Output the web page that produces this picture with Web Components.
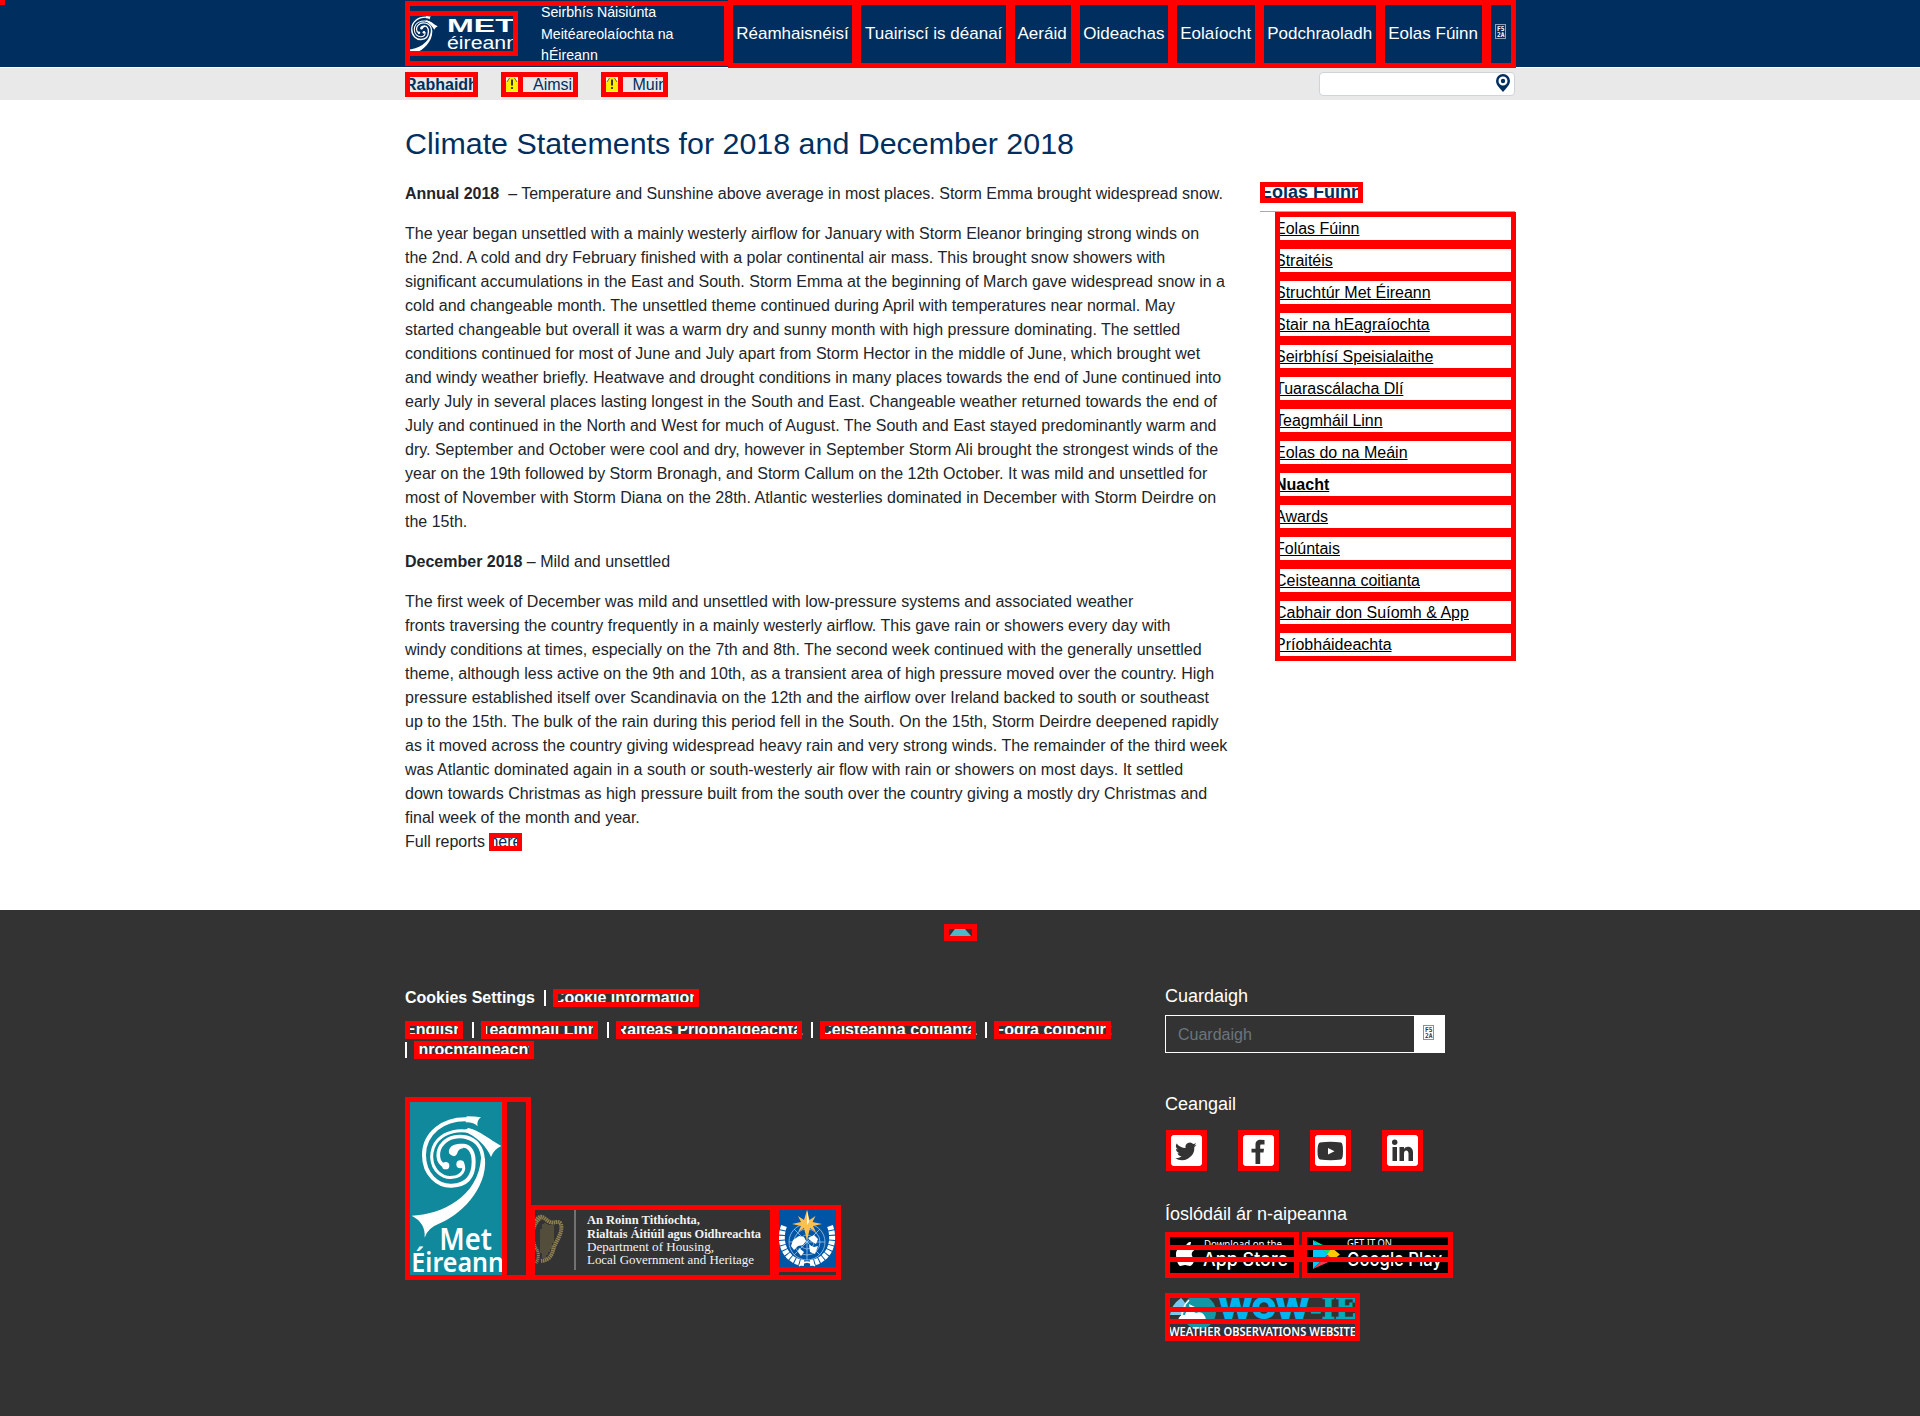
<!DOCTYPE html>
<html lang="ga">
<head>
<meta charset="utf-8">
<title>Climate Statements for 2018 and December 2018</title>
<style>
html,body{margin:0;padding:0;background:#fff}
body{font:16px/24px "Liberation Sans",Arial,sans-serif;color:#212529;overflow:hidden;height:1416px}
</style>
</head>
<body>
<met-page></met-page>
<script>
const SWIRL=`<g fill="none" stroke="#fff" stroke-linecap="round">
<path stroke-width="12" d="M235 119C140 108 87 165 87 225C87 285 130 319 170 317C215 315 236 290 236 245C236 208 216 194 200 198"/>
<path stroke-width="9" d="M276 183C225 130 110 145 110 232C112 272 143 296 172 292C200 290 212 270 203 252"/>
<path stroke-width="11" d="M150 258C124 248 124 210 145 189C175 156 262 160 264 240"/></g>
<g fill="#fff"><path d="M215 109Q240 109 258 112Q244 122 248 139Q236 126 212 127Z"/>
<path d="M220 144C255 152 285 180 319 198Q296 208 288 231C275 200 245 168 205 153Z"/>
<path d="M270 235C278 330 190 410 130 432Q98 444 89 473Q92 428 50 407C140 405 250 350 258 235Z"/>
<path d="M162 220C158 200 180 188 205 192L204 205Q190 206 186 222Q176 236 162 220Z"/>
<circle cx="152" cy="257" r="11"/><circle cx="196" cy="253" r="12"/></g>`;
const def=(name,css,html)=>customElements.define(name,class extends HTMLElement{
 constructor(){super();this.attachShadow({mode:'open'}).innerHTML=`<style>*{box-sizing:border-box}${css}</style>${html}`}
});
const RING='outline:5px solid #f00;outline-offset:-5px;';

def('met-link',`:host{display:block;flex:none;white-space:nowrap;${RING}}`,`<slot></slot>`);

def('hex-glyph',`:host{display:block;width:11px;height:15px;border:1px solid;border-color:color-mix(in srgb,currentColor 55%,transparent);box-sizing:border-box}svg{display:block}`,
`<svg width="9" height="13" viewBox="0 0 9 13" fill="currentColor" font-family="DejaVu Sans Mono" font-weight="bold" font-size="6.500"><text x="1" y="6" textLength="7.500" lengthAdjust="spacingAndGlyphs">F5</text><text x="1" y="12" textLength="7.500" lengthAdjust="spacingAndGlyphs">2A</text></svg>`);

def('met-header',`
:host{display:block;background:#002f5f;height:67px;color:#fff}
.in{display:flex;width:1111px;margin:0 auto 0 405px;height:68px}
.brand{display:flex;width:324px;height:65px;margin:1px 0 0;${RING}overflow:visible;flex:none}
.logo{display:block;width:113px;height:45px;margin-top:10px;${RING}}
.org{font-size:14.2px;line-height:21.6px;width:150px;margin:1px 0 0 23px;white-space:nowrap}
nav{display:flex;margin-left:-1px;height:68px}
met-link{height:68px;margin-right:-1px;padding-left:8.25px;font-size:17px;line-height:67px}
.icon{padding:24px 0 0 9px}`,
`<div class="in"><div class="brand"><svg class="logo" viewBox="0 0 113 45"><g transform="translate(-3 -7) scale(.112)">${SWIRL}</g>
<text x="42" y="21" fill="#fff" font-family="Liberation Sans" font-weight="bold" font-size="19" textLength="68" lengthAdjust="spacingAndGlyphs">MET</text>
<text x="42" y="38" fill="#fff" font-family="Liberation Sans" font-size="17.5" textLength="71" lengthAdjust="spacingAndGlyphs">éireann</text></svg>
<div class="org">Seirbhís Náisiúnta<br>Meitéareolaíochta na<br>hÉireann</div></div>
<nav><met-link style="width:129px">Réamhaisnéisí</met-link><met-link style="width:155px;padding-left:9px">Tuairiscí is déanaí</met-link><met-link style="width:66px;padding-left:7.5px">Aeráid</met-link><met-link style="width:98px">Oideachas</met-link><met-link style="width:88px">Eolaíocht</met-link><met-link style="width:122px">Podchraoladh</met-link><met-link style="width:107px">Eolas Fúinn</met-link><met-link class="icon" style="width:30px"><hex-glyph></hex-glyph></met-link></nav></div>`);

def('met-warn-icon',`:host{display:block;width:22px;height:25px;${RING}}svg{display:block}`,
`<svg width="22" height="25" viewBox="0 0 22 25"><path d="M5 6h12v12H5z" fill="#f7f7e0"/><path d="M8.500 5.500h5L17 11v8H5v-8z" fill="#ffee00"/><path d="M8.500 6L6 10M13.500 6L16 10" stroke="#333" stroke-width=".7"/><path d="M11 7.500v6" stroke="#222" stroke-width="1.800"/><circle cx="11" cy="16" r="1.100" fill="#222"/></svg>`);

def('met-alerts',`
:host{display:block;background:#e9e9e9;margin-top:1px;height:32px;color:#002f5f}
.in{display:flex;margin-left:405px;width:1110px;padding-top:4px}
met-link{height:25px;line-height:25px;margin-right:23px}
.b{width:73px;font-weight:bold}
.w{display:flex}
.w span{margin-left:10px}
.search{margin-left:auto;width:196px;height:24px;background:#fff;border:1px solid #ced4da;border-radius:4px;display:flex;justify-content:flex-end;padding:1px 4px 0 0}`,
`<div class="in"><met-link class="b">Rabhaidh</met-link><met-link style="width:77px"><div class="w"><met-warn-icon></met-warn-icon><span>Aimsir</span></div></met-link><met-link style="width:67px"><div class="w"><met-warn-icon></met-warn-icon><span style="margin-left:9.500px">Muirí</span></div></met-link>
<div class="search"><svg width="14" height="18" viewBox="0 0 14 18"><path fill="#002f5f" fill-rule="evenodd" d="M7 0a7 7 0 0 1 7 7c0 3-2 5-3.500 7L7 18l-3.500-4C2 12 0 10 0 7a7 7 0 0 1 7-7zm0 2.500a4.500 4.500 0 1 0 0 9 4.500 4.500 0 0 0 0-9z"/><circle cx="7" cy="7" r="2.200" fill="#002f5f"/></svg></div></div>`);

def('met-article',`
:host{display:block;width:855px;white-space:nowrap}
h1{font-size:30.4px;line-height:36px;font-weight:400;color:#002f5f;margin:1px 0 21px}
p{margin:0 0 16px}
met-link{display:inline-block;height:18px;line-height:18px;vertical-align:baseline;color:#002f5f}`,
`<h1>Climate Statements for 2018 and December 2018</h1>
<p><b>Annual 2018</b>&nbsp; – Temperature and Sunshine above average in most places. Storm Emma brought widespread snow.</p>
<p>The year began unsettled with a mainly westerly airflow for January with Storm Eleanor bringing strong winds on<br>the 2nd. A cold and dry February finished with a polar continental air mass. This brought snow showers with<br>significant accumulations in the East and South. Storm Emma at the beginning of March gave widespread snow in a<br>cold and changeable month. The unsettled theme continued during April with temperatures near normal. May<br>started changeable but overall it was a warm dry and sunny month with high pressure dominating. The settled<br>conditions continued for most of June and July apart from Storm Hector in the middle of June, which brought wet<br>and windy weather briefly. Heatwave and drought conditions in many places towards the end of June continued into<br>early July in several places lasting longest in the South and East. Changeable weather returned towards the end of<br>July and continued in the North and West for much of August. The South and East stayed predominantly warm and<br>dry. September and October were cool and dry, however in September Storm Ali brought the strongest winds of the<br>year on the 19th followed by Storm Bronagh, and Storm Callum on the 12th October. It was mild and unsettled for<br>most of November with Storm Diana on the 28th. Atlantic westerlies dominated in December with Storm Deirdre on<br>the 15th.</p>
<p><b>December 2018</b> – Mild and unsettled</p>
<p>The first week of December was mild and unsettled with low-pressure systems and associated weather<br>fronts traversing the country frequently in a mainly westerly airflow. This gave rain or showers every day with<br>windy conditions at times, especially on the 7th and 8th. The second week continued with the generally unsettled<br>theme, although less active on the 9th and 10th, as a transient area of high pressure moved over the country. High<br>pressure established itself over Scandinavia on the 12th and the airflow over Ireland backed to south or southeast<br>up to the 15th. The bulk of the rain during this period fell in the South. On the 15th, Storm Deirdre deepened rapidly<br>as it moved across the country giving widespread heavy rain and very strong winds. The remainder of the third week<br>was Atlantic dominated again in a south or south-westerly air flow with rain or showers on most days. It settled<br>down towards Christmas as high pressure built from the south over the country giving a mostly dry Christmas and<br>final week of the month and year.<br>Full reports <met-link>here</met-link></p>`);

def('met-sidebar',`
:host{display:block;width:256px;padding-top:58px}
.t{width:103px;height:21px;font:bold 18px/21px "Liberation Sans",Arial,sans-serif;color:#002f5f}
.l{border-top:1px solid #aaa;margin-top:8px;width:255px}
.i{margin-left:15px;width:241px}
.i met-link{height:33px;margin-bottom:-1px;line-height:34px;color:#000;text-decoration:underline}
.i .on{font-weight:bold}`,
`<met-link class="t">Eolas Fúinn</met-link><div class="l"></div><div class="i">${['Eolas Fúinn','Straitéis','Struchtúr Met Éireann','Stair na hEagraíochta','Seirbhísí Speisialaithe','Tuarascálacha Dlí','Teagmháil Linn','Eolas do na Meáin','Nuacht','Awards','Folúntais','Ceisteanna coitianta','Cabhair don Suíomh &amp; App','Príobháideachta'].map(t=>`<met-link${t=='Nuacht'?' class="on"':''}>${t}</met-link>`).join('')}</div>`);

def('met-logos',`
:host{display:flex;align-items:flex-end;height:183px;font-weight:400}
svg{display:block;${RING}flex:none}
.met{display:block;width:126px;height:183px;${RING}}
.wmo{width:67px;height:75px;margin-left:-1px;${RING}}
.dept{margin-left:-1px}`,
`<div class="met"><svg width="102" height="183" viewBox="30 51 306 549"><path fill="#10899c" d="M30 51h306v549H30z"/>${SWIRL}
<g fill="#fff" font-family="Noto Sans,sans-serif" font-weight="600"><text x="133" y="510" font-size="92" textLength="158" lengthAdjust="spacingAndGlyphs">Met</text><text x="49" y="576" font-size="80" textLength="278" lengthAdjust="spacingAndGlyphs">Éireann</text></g></svg></div>
<svg class="dept" width="245" height="75" viewBox="0 0 245 75"><g fill="none" stroke="#91804f"><path stroke-width="4" stroke-dasharray="1.500 .6" d="M6 16C10 8 14 13 18 16C24 20 28 14 31 19C33 27 27 35 24 42C22 50 20 55 11 56"/><path stroke-width="3" stroke-dasharray="1.200 .7" d="M11 13C2 20 1 34 6 43C10 49 8 55 6 58"/><path stroke-width=".7" d="M13 19v34M15 18v35M17 19v31M19 20v27M21 20v24M23 20v18M11 24v24"/></g>
<path d="M45 5v60" stroke="#888" stroke-width="1.500"/><g fill="#f2f2f2" font-family="Liberation Serif,serif" font-size="13.500"><g font-weight="bold"><text x="57" y="19" font-size="13" textLength="113" lengthAdjust="spacingAndGlyphs">An Roinn Tithíochta,</text><text x="57" y="32.500" font-size="13" textLength="174" lengthAdjust="spacingAndGlyphs">Rialtais Áitiúil agus Oidhreachta</text></g><text x="57" y="46" textLength="127" lengthAdjust="spacingAndGlyphs">Department of Housing,</text><text x="57" y="59" textLength="167" lengthAdjust="spacingAndGlyphs">Local Government and Heritage</text></g></svg>
<div class="wmo"><svg width="67" height="67" viewBox="0 0 67 67"><path fill="#0055a5" d="M0 0h67v67H0z"/><g fill="none" stroke="#9fc4e8" stroke-width=".8"><circle cx="33" cy="37" r="18"/><circle cx="33" cy="37" r="13"/><circle cx="33" cy="37" r="7"/><path d="M15 37h36M33 19v36M20 24l26 26M46 24L20 50"/></g>
<g fill="none" stroke="#fff"><path stroke-width="6" stroke-dasharray="4 1" d="M10 21C3 40 14 57 30 58M56 21C63 40 52 57 36 58"/><path stroke-width="1.500" d="M25 61Q33 53 41 61"/></g>
<path fill="#fff" d="M19 35l6-4 5 1 2 4-3 4-5 1-4 4-3-4zM34 33l6-3 4 4-2 5-5-3zM35 40l5 2 4-1-3 8-5-2zM25 43l5 4-3 4-3-4z"/>
<path fill="#ffc04d" d="M33 5l2.500 10 6-4-3 6L48 19l-9 2 3 6-6-4-3 12-3-12-6 4 3-6-9-2 9-2-3-6 6 4z"/><path fill="#fff" d="M33 5l2 12-2 3z"/></svg></div>`);

def('met-social',`:host{display:flex;gap:31px;margin-left:1px}svg{display:block;${RING}}`,
[`<path transform="translate(8.500 10) scale(.96)" d="M23 4.900c-.8.400-1.700.6-2.600.7a4.600 4.600 0 0 0 2-2.500c-.9.500-1.900.9-2.900 1.100a4.600 4.600 0 0 0-7.900 4.200A13 13 0 0 1 2.200 3.600a4.600 4.600 0 0 0 1.400 6.100c-.7 0-1.500-.2-2.100-.6 0 2.200 1.600 4.200 3.700 4.600-.7.200-1.400.2-2.100.1.600 1.800 2.300 3.100 4.300 3.200A9.200 9.200 0 0 1 .700 18.900a13 13 0 0 0 20-11.600c.9-.6 1.700-1.400 2.300-2.400z"/>`,
`<path d="M26.500 10v4.500h-3c-1 0-1.300.5-1.300 1.300v3H26l-.5 3.700h-3.300V34h-4.700V22.500H13.500v-3.700h4v-4c0-3.500 2-5 5-5z"/>`,
`<path fill-rule="evenodd" d="M10 12.500Q20.500 11 31 12.500Q33 13 33 21Q33 29 31 29.500Q20.500 31 10 29.500Q7.500 29 7.500 21Q7.500 13 10 12.500zM18 18v6.500l6.500-3.300z"/>`,
`<circle cx="12.700" cy="12.300" r="2.700"/><path d="M10.500 17H15v14h-4.500zM17.500 17H22v2c2-3.500 9-3 9 3.500V31h-4.500v-7.500c0-4-4.500-4-4.500 0V31h-4.500z"/>`
].map(p=>`<svg width="41" height="41" viewBox="0 0 41 41"><rect x="5" y="5" width="31" height="31" rx="3" fill="#fff"/><g fill="#333">${p}</g></svg>`).join(''));

def('met-badges',`
:host{display:block}
.r{display:flex;gap:3px}
.r svg,.w svg{display:block;${RING}}
.c{position:relative}
.c i{position:absolute;left:0;right:0;top:13px;height:17px;${RING}}
.w{margin-top:15px;width:195px}
.w i{top:14px}
.r .c:first-child i{right:-3px}
text{font-family:"Noto Sans",sans-serif}`,
`<div class="r"><div class="c"><svg width="134" height="46" viewBox="0 0 134 46"><path d="M0 0h134v46H0z"/><g fill="#fff"><path d="M26 10c0 3-2 5-5 5 0-3 2-5 5-5zM11 22c0-6 6-8 9-6 2 1 3 0 5-.5q3 0 4.500 2.500c-4 2-3.500 7 .5 9-1 3-3 7-5 7s-3-1-5-1-3 1-4.500 1C13 34 11 27 11 22z"/><g font-size="19" font-weight="500"><text x="39" y="15.500" font-size="10" font-weight="400" textLength="78" lengthAdjust="spacingAndGlyphs">Download on the</text><text x="38" y="34" textLength="85" lengthAdjust="spacingAndGlyphs" style="font-family:Inter,sans-serif">App Store</text></g></g></svg><i></i></div>
<div class="c"><svg width="151" height="46" viewBox="0 0 151 46"><path d="M0 0h151v46H0z"/><path fill="#00c8ff" d="M11 8v29l15-14.500z"/><path fill="#00e08a" d="M11 8l20 10-5 5z"/><path fill="#ffcb00" d="M30 16l8 6.500-8 6-5-6z"/><path fill="#f33b55" d="M11 37l15-14 5 5z"/><g fill="#fff"><text x="45" y="14.500" font-size="10" textLength="45" lengthAdjust="spacingAndGlyphs">GET IT ON</text><text x="45" y="34" font-size="19" font-weight="500" textLength="95" lengthAdjust="spacingAndGlyphs" style="font-family:Inter,sans-serif">Google Play</text></g></svg><i></i></div></div>
<div class="w c"><svg width="195" height="48" viewBox="0 0 195 48"><path fill="#303240" d="M5 31h185v13H5z"/><circle cx="34" cy="19" r="17" fill="#1397a5"/><path fill="#7cc6ee" d="M16 5Q6 12 5 22h12Q26 14 16 5z"/><path d="M24 7Q16 15 17 26" fill="none" stroke="#fff" stroke-width="1.500"/><path fill="#fff" d="M13 27q2-6 7-5 1-5 7-4l4 2q8-3 10 7zM24 11l6 3-5 3z"/><path d="M42 7q12 10 1 19" fill="none" stroke="#1397a5" stroke-width="3"/>
<g font-weight="900"><text x="53" y="26" font-size="30" fill="#00b4f0" style="font-family:Inter,sans-serif" textLength="92" lengthAdjust="spacingAndGlyphs">WOW</text><text x="145" y="26" font-size="29" fill="#00aebb" stroke="#00aebb" style="font-family:'DejaVu Serif',serif" textLength="47" lengthAdjust="spacingAndGlyphs">-IE</text></g>
<text x="4" y="42.500" font-size="11.800" font-weight="600" fill="#fff" textLength="187" lengthAdjust="spacingAndGlyphs">WEATHER OBSERVATIONS WEBSITE</text></svg><i></i></div>`);

def('met-footer',`
:host{display:block;background:#333;height:506px;color:#fff}
.top{display:block;width:33px;height:17px;margin:0 0 0 944px;${RING}}
.pad{padding-top:14px}
.cols{display:flex;margin:48px 0 0 405px}
.left{width:760px;font-weight:bold}
.row{display:flex;height:18px;line-height:18px;margin-bottom:14px;white-space:nowrap}
.row met-link{letter-spacing:.03px}
.row+.row{margin-bottom:2px}
.bar{width:2px;height:16px;margin:1px 7px 0 9px;background:#fff}
.bar.f{margin-left:0}
met-logos{margin-top:38px}
h2{font-size:18px;line-height:22px;font-weight:400;margin:0;color:#fff}
.f2{display:flex;width:280px;height:38px;border:1px solid #fff;margin:8px 0 40px;line-height:37px}
.f2 span{flex:1;padding-left:12px;color:#6c757d}
.f2 b{width:30px;background:#fff;color:#333;padding:9px 0 0 9px}
met-social{margin-top:15px}
.ios{margin:32px 0 7px}`,
`<div class="pad"><svg class="top" viewBox="0 0 33 17"><path fill="#50b7c8" d="M5.500 12L11 5h10l6 7z"/></svg></div>
<div class="cols"><div class="left"><div class="row">Cookies Settings<span class="bar"></span><met-link>Cookie information</met-link></div>
<div class="row"><met-link>English</met-link><span class="bar"></span><met-link>Teagmháil Linn</met-link><span class="bar"></span><met-link>Ráiteas Príobháideachta</met-link><span class="bar"></span><met-link>Ceisteanna coitianta</met-link><span class="bar"></span><met-link>Fógra cóipchirt</met-link></div>
<div class="row"><span class="bar f"></span><met-link>Inrochtaineacht</met-link></div><met-logos></met-logos></div>
<div class="right"><h2 style="margin-top:-4px">Cuardaigh</h2><div class="f2"><span>Cuardaigh</span><b><hex-glyph></hex-glyph></b></div><h2>Ceangail</h2><met-social></met-social><h2 class="ios">Íoslódáil ár n-aipeanna</h2><met-badges></met-badges></div></div>`);

def('met-page',`
:host{display:block;height:1416px;overflow:hidden}
.skip{position:absolute;left:0;top:0;width:5px;height:5px;background:#f00}
main{display:flex;margin-left:405px;padding-top:24px;height:810px}`,
`<div class="skip"></div><met-header></met-header><met-alerts></met-alerts><main><met-article></met-article><met-sidebar></met-sidebar></main><met-footer></met-footer>`);
</script>
</body>
</html>
